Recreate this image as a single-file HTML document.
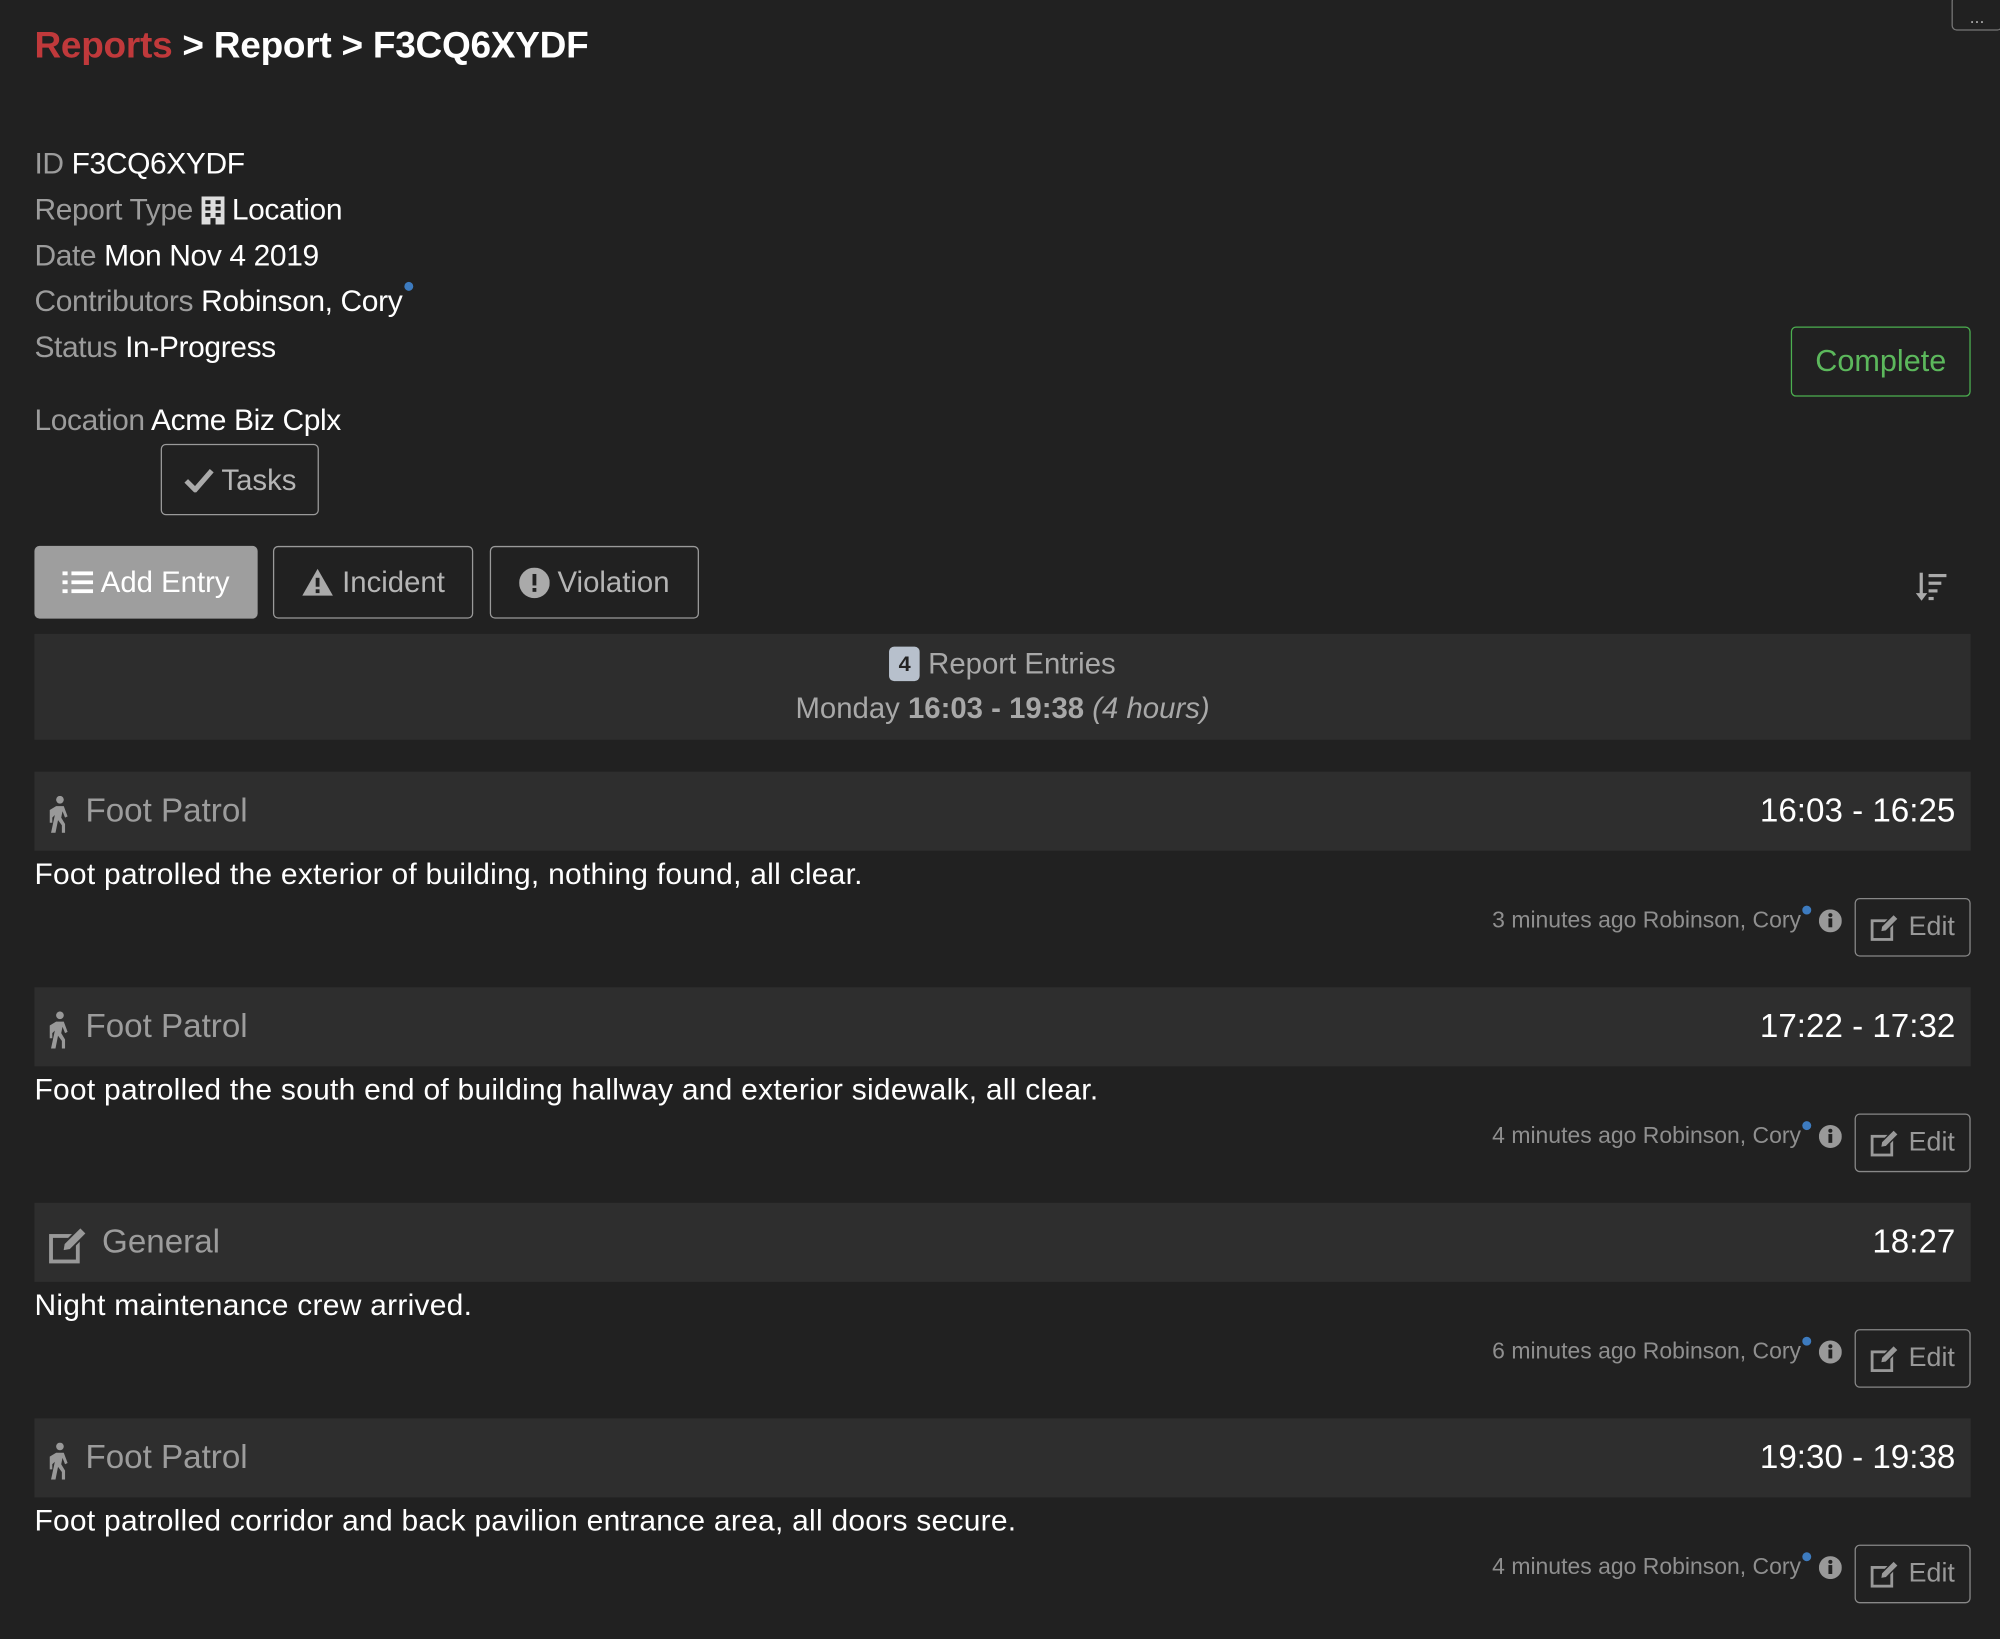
<!DOCTYPE html>
<html><head><meta charset="utf-8"><style>
html,body{margin:0;padding:0;background:#212121;width:2000px;height:1639px;overflow:hidden}
#w{position:absolute;left:0;top:0;width:1568px;height:1285px;transform:scale(1.27551);transform-origin:0 0;font-family:"Liberation Sans",sans-serif;color:#fff}
.a{position:absolute;white-space:nowrap}
.l{color:#9c9c9c}
.btn{position:absolute;box-sizing:border-box;border:1.5px solid #9a9a9a;border-radius:4px;color:#b5b5b5;font-size:23px;display:flex;align-items:center;justify-content:center;gap:6px}
.hdr{position:absolute;left:27px;width:1518px;height:62px;background:#2e2e2e}
.meta{position:absolute;right:156px;font-size:18px;color:#8f8f8f}
.body{position:absolute;left:27px;font-size:23.5px;white-space:nowrap}
</style></head><body><div id="w">
<div class="a" style="left:27px;top:20px;font-size:29px;font-weight:bold;letter-spacing:-0.2px"><span style="color:#c0393b">Reports</span> &gt; Report &gt; F3CQ6XYDF</div>
<div class="a" style="left:1530px;top:-3px;width:40px;height:27px;border:1px solid #777;border-radius:4px;box-sizing:border-box;color:#aaa;font-size:14px;text-align:center;line-height:30px">...</div>

<div style="position:absolute;left:27px;top:110px;font-size:23.5px;line-height:36px;letter-spacing:-0.3px">
<div><span class="l">ID</span> F3CQ6XYDF</div>
<div><span class="l">Report Type</span> <svg width="18" height="22" viewBox="0 0 18 22" style="vertical-align:-4px"><rect x="0" y="0" width="18" height="22" fill="#ddd"/><g fill="#212121"><rect x="3" y="3" width="4" height="3"/><rect x="11" y="3" width="4" height="3"/><rect x="3" y="8" width="4" height="3"/><rect x="11" y="8" width="4" height="3"/><rect x="3" y="13" width="4" height="3"/><rect x="11" y="13" width="4" height="3"/><rect x="7" y="17" width="4" height="5"/></g></svg> Location</div>
<div><span class="l">Date</span> Mon Nov 4 2019</div>
<div style="position:relative"><span class="l">Contributors</span> Robinson, Cory<span style="display:inline-block;width:7px;height:7px;border-radius:50%;background:#3d7bbf;position:relative;top:-16px;left:2px"></span></div>
<div><span class="l">Status</span> In-Progress</div>
<div style="margin-top:21px"><span class="l">Location</span> Acme Biz Cplx</div>
</div>
<div class="btn" style="left:126px;top:348px;width:124px;height:56px"><svg width="24" height="20" viewBox="0 0 24 20"><path d="M2 11l7 7L22 3" stroke="#aaa" stroke-width="4" fill="none"/></svg>Tasks</div>
<div class="btn" style="left:1404px;top:256px;width:141px;height:55px;border-color:#4caf50;color:#5cb85c;font-size:24px">Complete</div>

<div class="btn" style="left:27px;top:428px;width:175px;height:57px;background:#9e9e9e;border-color:#9e9e9e;color:#fff"><svg width="24" height="20" viewBox="0 0 24 20" fill="#fff"><rect x="0" y="1" width="4" height="3"/><rect x="0" y="8" width="4" height="3"/><rect x="0" y="15" width="4" height="3"/><rect x="7" y="1" width="17" height="3"/><rect x="7" y="8" width="17" height="3"/><rect x="7" y="15" width="17" height="3"/></svg>Add Entry</div>
<div class="btn" style="left:214px;top:428px;width:157px;height:57px"><svg width="26" height="23" viewBox="0 0 26 23"><path d="M13 1L25 22H1z" fill="#aaa"/><rect x="11.5" y="8" width="3" height="7" fill="#212121"/><rect x="11.5" y="17" width="3" height="3" fill="#212121"/></svg>Incident</div>
<div class="btn" style="left:384px;top:428px;width:164px;height:57px"><svg width="24" height="24" viewBox="0 0 24 24"><circle cx="12" cy="12" r="12" fill="#aaa"/><rect x="10.5" y="5" width="3" height="9" fill="#212121"/><rect x="10.5" y="16" width="3" height="3" fill="#212121"/></svg>Violation</div>
<svg class="a" style="left:1502px;top:447px" width="26" height="26" viewBox="0 0 26 26" fill="#aaa"><rect x="3" y="2" width="2.5" height="18"/><path d="M0 18h9l-4.5 6z"/><rect x="10" y="3" width="14" height="2.5"/><rect x="10" y="9" width="10" height="2.5"/><rect x="10" y="15" width="7" height="2.5"/><rect x="10" y="21" width="4" height="2.5"/></svg>

<div style="position:absolute;left:27px;top:497px;width:1518px;height:83px;background:#2d2d2d;text-align:center;font-size:23px;color:#a8a8a8">
<div style="position:absolute;top:10px;width:100%"><span style="display:inline-block;background:#b7c0cc;color:#222;border-radius:4px;font-size:17px;font-weight:bold;width:24px;height:27px;line-height:27px;vertical-align:2px">4</span> Report Entries</div>
<div style="position:absolute;top:45px;width:100%">Monday <b>16:03 - 19:38</b> <i>(4 hours)</i></div>
</div>

<div class="hdr" style="top:605px"></div>
<div class="hdr" style="top:774px"></div>
<div class="hdr" style="top:943px"></div>
<div class="hdr" style="top:1112px"></div>

<svg class="a" style="left:37px;top:624px" width="20" height="29" viewBox="0 0 20 29" fill="#999"><circle cx="10" cy="3" r="3"/><path d="M7 8l6 0 3 8-2 1-2-5-1 5 3 5 0 7h-2.5v-6l-3-4-2 10H3l3-14-2 2v4H2V11z"/></svg>
<div class="a" style="left:67px;top:620px;font-size:26px;color:#9c9c9c">Foot Patrol</div>
<div class="a" style="right:35px;top:620px;font-size:26px">16:03 - 16:25</div>
<svg class="a" style="left:37px;top:793px" width="20" height="29" viewBox="0 0 20 29" fill="#999"><circle cx="10" cy="3" r="3"/><path d="M7 8l6 0 3 8-2 1-2-5-1 5 3 5 0 7h-2.5v-6l-3-4-2 10H3l3-14-2 2v4H2V11z"/></svg>
<div class="a" style="left:67px;top:789px;font-size:26px;color:#9c9c9c">Foot Patrol</div>
<div class="a" style="right:35px;top:789px;font-size:26px">17:22 - 17:32</div>
<svg class="a" style="left:38px;top:961px" width="32" height="30" viewBox="0 0 32 30"><rect x="2" y="8" width="21" height="20" fill="none" stroke="#999" stroke-width="3"/><path d="M11 20l1-6L25 1l5 5-13 13z" fill="#999" stroke="#2e2e2e" stroke-width="1.5"/></svg>
<div class="a" style="left:80px;top:958px;font-size:26px;color:#9c9c9c">General</div>
<div class="a" style="right:35px;top:958px;font-size:26px">18:27</div>
<svg class="a" style="left:37px;top:1131px" width="20" height="29" viewBox="0 0 20 29" fill="#999"><circle cx="10" cy="3" r="3"/><path d="M7 8l6 0 3 8-2 1-2-5-1 5 3 5 0 7h-2.5v-6l-3-4-2 10H3l3-14-2 2v4H2V11z"/></svg>
<div class="a" style="left:67px;top:1127px;font-size:26px;color:#9c9c9c">Foot Patrol</div>
<div class="a" style="right:35px;top:1127px;font-size:26px">19:30 - 19:38</div>

<div class="body" style="top:672px;letter-spacing:0.2px">Foot patrolled the exterior of building, nothing found, all clear.</div>
<div class="body" style="top:841px;letter-spacing:0.2px">Foot patrolled the south end of building hallway and exterior sidewalk, all clear.</div>
<div class="body" style="top:1010px;letter-spacing:0.2px">Night maintenance crew arrived.</div>
<div class="body" style="top:1179px;letter-spacing:0.2px">Foot patrolled corridor and back pavilion entrance area, all doors secure.</div>

<div class="meta" style="top:711px">3 minutes ago Robinson, Cory</div>
<div class="meta" style="top:880px">4 minutes ago Robinson, Cory</div>
<div class="meta" style="top:1049px">6 minutes ago Robinson, Cory</div>
<div class="meta" style="top:1218px">4 minutes ago Robinson, Cory</div>

<div class="a" style="left:1413px;top:710px;width:7px;height:7px;border-radius:50%;background:#3d7bbf"></div>
<div class="a" style="left:1413px;top:879px;width:7px;height:7px;border-radius:50%;background:#3d7bbf"></div>
<div class="a" style="left:1413px;top:1048px;width:7px;height:7px;border-radius:50%;background:#3d7bbf"></div>
<div class="a" style="left:1413px;top:1217px;width:7px;height:7px;border-radius:50%;background:#3d7bbf"></div>

<svg class="a" style="left:1426px;top:713px" width="18" height="18" viewBox="0 0 18 18"><circle cx="9" cy="9" r="9" fill="#999"/><rect x="7.5" y="7" width="3" height="7" fill="#212121"/><circle cx="9" cy="4.5" r="1.6" fill="#212121"/></svg>
<svg class="a" style="left:1426px;top:882px" width="18" height="18" viewBox="0 0 18 18"><circle cx="9" cy="9" r="9" fill="#999"/><rect x="7.5" y="7" width="3" height="7" fill="#212121"/><circle cx="9" cy="4.5" r="1.6" fill="#212121"/></svg>
<svg class="a" style="left:1426px;top:1051px" width="18" height="18" viewBox="0 0 18 18"><circle cx="9" cy="9" r="9" fill="#999"/><rect x="7.5" y="7" width="3" height="7" fill="#212121"/><circle cx="9" cy="4.5" r="1.6" fill="#212121"/></svg>
<svg class="a" style="left:1426px;top:1220px" width="18" height="18" viewBox="0 0 18 18"><circle cx="9" cy="9" r="9" fill="#999"/><rect x="7.5" y="7" width="3" height="7" fill="#212121"/><circle cx="9" cy="4.5" r="1.6" fill="#212121"/></svg>

<div class="btn" style="left:1454px;top:704px;width:91px;height:46px;font-size:21px;color:#999;border-color:#888"><svg width="24" height="22" viewBox="0 0 32 30"><rect x="2" y="8" width="21" height="20" fill="none" stroke="#999" stroke-width="3"/><path d="M11 20l1-6L25 1l5 5-13 13z" fill="#999" stroke="#212121" stroke-width="1.5"/></svg>Edit</div>
<div class="btn" style="left:1454px;top:873px;width:91px;height:46px;font-size:21px;color:#999;border-color:#888"><svg width="24" height="22" viewBox="0 0 32 30"><rect x="2" y="8" width="21" height="20" fill="none" stroke="#999" stroke-width="3"/><path d="M11 20l1-6L25 1l5 5-13 13z" fill="#999" stroke="#212121" stroke-width="1.5"/></svg>Edit</div>
<div class="btn" style="left:1454px;top:1042px;width:91px;height:46px;font-size:21px;color:#999;border-color:#888"><svg width="24" height="22" viewBox="0 0 32 30"><rect x="2" y="8" width="21" height="20" fill="none" stroke="#999" stroke-width="3"/><path d="M11 20l1-6L25 1l5 5-13 13z" fill="#999" stroke="#212121" stroke-width="1.5"/></svg>Edit</div>
<div class="btn" style="left:1454px;top:1211px;width:91px;height:46px;font-size:21px;color:#999;border-color:#888"><svg width="24" height="22" viewBox="0 0 32 30"><rect x="2" y="8" width="21" height="20" fill="none" stroke="#999" stroke-width="3"/><path d="M11 20l1-6L25 1l5 5-13 13z" fill="#999" stroke="#212121" stroke-width="1.5"/></svg>Edit</div>
</div></body></html>
